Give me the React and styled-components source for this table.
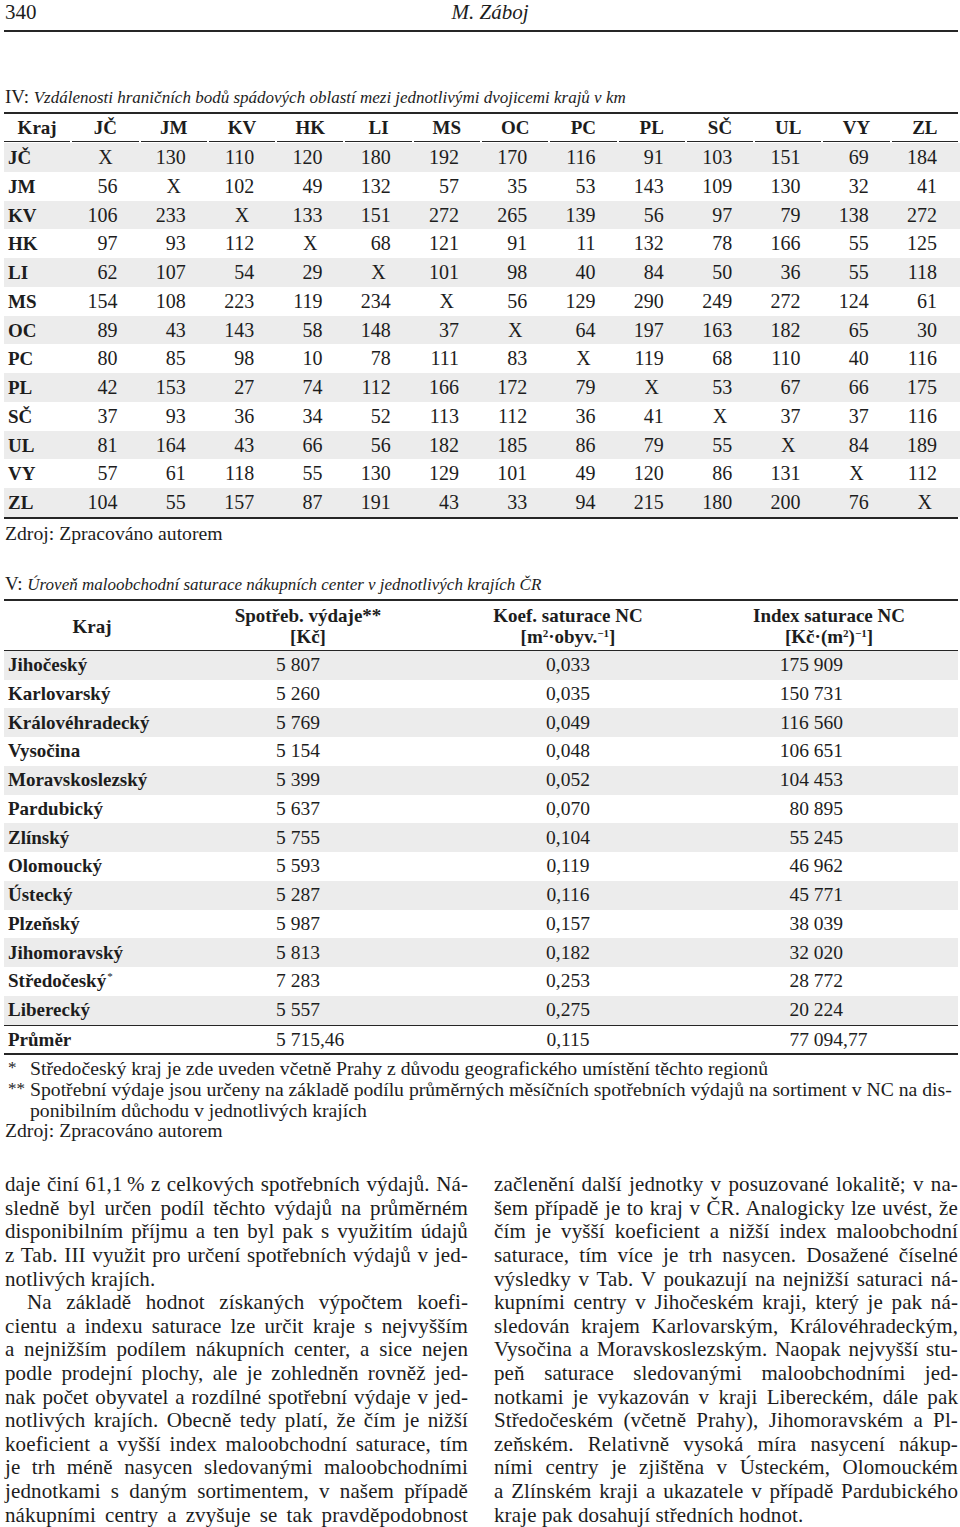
import React from "react";
import styled, { createGlobalStyle } from "styled-components";

//------------------------------------------------------------//
//DATA

const REGIONS = ["JČ", "JM", "KV", "HK", "LI", "MS", "OC", "PC", "PL", "SČ", "UL", "VY", "ZL"];

//null = X (same region)
const DISTANCES = [
  [null, 130, 110, 120, 180, 192, 170, 116, 91, 103, 151, 69, 184],
  [56, null, 102, 49, 132, 57, 35, 53, 143, 109, 130, 32, 41],
  [106, 233, null, 133, 151, 272, 265, 139, 56, 97, 79, 138, 272],
  [97, 93, 112, null, 68, 121, 91, 11, 132, 78, 166, 55, 125],
  [62, 107, 54, 29, null, 101, 98, 40, 84, 50, 36, 55, 118],
  [154, 108, 223, 119, 234, null, 56, 129, 290, 249, 272, 124, 61],
  [89, 43, 143, 58, 148, 37, null, 64, 197, 163, 182, 65, 30],
  [80, 85, 98, 10, 78, 111, 83, null, 119, 68, 110, 40, 116],
  [42, 153, 27, 74, 112, 166, 172, 79, null, 53, 67, 66, 175],
  [37, 93, 36, 34, 52, 113, 112, 36, 41, null, 37, 37, 116],
  [81, 164, 43, 66, 56, 182, 185, 86, 79, 55, null, 84, 189],
  [57, 61, 118, 55, 130, 129, 101, 49, 120, 86, 131, null, 112],
  [104, 55, 157, 87, 191, 43, 33, 94, 215, 180, 200, 76, null],
];

const S = "\u00A0";
const THIN = "\u202F";

const SATURATION = [
  ["Jihočeský", `5${S}807`, "0,033", `175${S}909`],
  ["Karlovarský", `5${S}260`, "0,035", `150${S}731`],
  ["Královéhradecký", `5${S}769`, "0,049", `116${S}560`],
  ["Vysočina", `5${S}154`, "0,048", `106${S}651`],
  ["Moravskoslezský", `5${S}399`, "0,052", `104${S}453`],
  ["Pardubický", `5${S}637`, "0,070", `80${S}895`],
  ["Zlínský", `5${S}755`, "0,104", `55${S}245`],
  ["Olomoucký", `5${S}593`, "0,119", `46${S}962`],
  ["Ústecký", `5${S}287`, "0,116", `45${S}771`],
  ["Plzeňský", `5${S}987`, "0,157", `38${S}039`],
  ["Jihomoravský", `5${S}813`, "0,182", `32${S}020`],
  ["Středočeský", `7${S}283`, "0,253", `28${S}772`, true],
  ["Liberecký", `5${S}557`, "0,275", `20${S}224`],
];

const LEFT_TEXT = [
  [`daje činí 61,1${THIN}% z celkových spotřebních výdajů. Ná-`],
  ["sledně byl určen podíl těchto výdajů na průměrném"],
  ["disponibilním příjmu a ten byl pak s využitím údajů"],
  ["z Tab. III využit pro určení spotřebních výdajů v jed-"],
  ["notlivých krajích.", "last"],
  ["Na základě hodnot získaných výpočtem koefi-", "indent"],
  ["cientu a indexu saturace lze určit kraje s nejvyšším"],
  ["a nejnižším podílem nákupních center, a sice nejen"],
  ["podle prodejní plochy, ale je zohledněn rovněž jed-"],
  ["nak počet obyvatel a rozdílné spotřební výdaje v jed-"],
  ["notlivých krajích. Obecně tedy platí, že čím je nižší"],
  ["koeficient a vyšší index maloobchodní saturace, tím"],
  ["je trh méně nasycen sledovanými maloobchodními"],
  ["jednotkami s daným sortimentem, v našem případě"],
  ["nákupními centry a zvyšuje se tak pravděpodobnost"],
];

const RIGHT_TEXT = [
  ["začlenění další jednotky v posuzované lokalitě; v na-"],
  ["šem případě je to kraj v ČR. Analogicky lze uvést, že"],
  ["čím je vyšší koeficient a nižší index maloobchodní"],
  ["saturace, tím více je trh nasycen. Dosažené číselné"],
  ["výsledky v Tab. V poukazují na nejnižší saturaci ná-"],
  ["kupními centry v Jihočeském kraji, který je pak ná-"],
  ["sledován krajem Karlovarským, Královéhradeckým,"],
  ["Vysočina a Moravskoslezským. Naopak nejvyšší stu-"],
  ["peň saturace sledovanými maloobchodními jed-"],
  ["notkami je vykazován v kraji Libereckém, dále pak"],
  ["Středočeském (včetně Prahy), Jihomoravském a Pl-"],
  ["zeňském. Relativně vysoká míra nasycení nákup-"],
  ["ními centry je zjištěna v Ústeckém, Olomouckém"],
  ["a Zlínském kraji a ukazatele v případě Pardubického"],
  ["kraje pak dosahují středních hodnot.", "last"],
];

//------------------------------------------------------------//

const App = () => {
  return (
    <>
      <GlobalStyle />
      <PAGE>
        <HEADER>
          <PAGENUM>340</PAGENUM>
          <RUNNING>M. Záboj</RUNNING>
          <span />
        </HEADER>

        {/* Table IV */}
        <CAPTION $top={54}>
          IV: <em>Vzdálenosti hraničních bodů spádových oblastí mezi jednotlivými dvojicemi krajů v km</em>
        </CAPTION>
        <TABLE>
          <DROW>
            <DHEAD>Kraj</DHEAD>
            {REGIONS.map((r) => (
              <DHEAD key={r}>{r}</DHEAD>
            ))}
          </DROW>
          {DISTANCES.map((row, i) => (
            <DROW key={REGIONS[i]}>
              <DCELL $shade={i % 2 === 0} $label>
                {REGIONS[i]}
              </DCELL>
              {row.map((v, j) => (
                <DCELL key={j} $shade={i % 2 === 0} $center={v === null}>
                  {v === null ? "X" : v}
                </DCELL>
              ))}
            </DROW>
          ))}
        </TABLE>
        <SOURCE>Zdroj: Zpracováno autorem</SOURCE>

        {/* Table V */}
        <CAPTION $top={29}>
          V: <em>Úroveň maloobchodní saturace nákupních center v jednotlivých krajích ČR</em>
        </CAPTION>
        <TABLE>
          <SHEADROW>
            <SHEAD>Kraj</SHEAD>
            <SHEAD>
              Spotřeb. výdaje**
              <br />
              [Kč]
            </SHEAD>
            <SHEAD>
              Koef. saturace NC
              <br />
              [m<sup>2</sup>·obyv.<sup>−1</sup>]
            </SHEAD>
            <SHEAD>
              Index saturace NC
              <br />
              [Kč·(m<sup>2</sup>)<sup>−1</sup>]
            </SHEAD>
          </SHEADROW>
          {SATURATION.map(([name, spend, koef, index, star], i) => (
            <SROW key={name} $shade={i % 2 === 0}>
              <SLABEL>
                {name}
                {star && <STAR>*</STAR>}
              </SLABEL>
              <SSPEND>{spend}</SSPEND>
              <SKOEF>{koef}</SKOEF>
              <SINDEX>
                <INT>{index}</INT>
              </SINDEX>
            </SROW>
          ))}
          <SROW $total>
            <SLABEL>Průměr</SLABEL>
            <SSPEND>5{S}715,46</SSPEND>
            <SKOEF>0,115</SKOEF>
            <SINDEX>
              <INT>77{S}094</INT>,77
            </SINDEX>
          </SROW>
        </TABLE>

        <NOTES>
          <NOTE>
            <MARK>*</MARK>
            <span>Středočeský kraj je zde uveden včetně Prahy z důvodu geografického umístění těchto regionů</span>
          </NOTE>
          <NOTE>
            <MARK>**</MARK>
            <span>
              Spotřební výdaje jsou určeny na základě podílu průměrných měsíčních spotřebních výdajů na sortiment v NC na dis-
              <br />
              ponibilním důchodu v jednotlivých krajích
            </span>
          </NOTE>
          <NOTESOURCE>Zdroj: Zpracováno autorem</NOTESOURCE>
        </NOTES>

        {/* Body text */}
        <COLUMNS>
          <COLUMN>
            {LEFT_TEXT.map(([t, kind], i) => (
              <LINE key={i} $last={kind === "last"} $indent={kind === "indent"}>
                {t}
              </LINE>
            ))}
          </COLUMN>
          <COLUMN>
            {RIGHT_TEXT.map(([t, kind], i) => (
              <LINE key={i} $last={kind === "last"} $indent={kind === "indent"}>
                {t}
              </LINE>
            ))}
          </COLUMN>
        </COLUMNS>
      </PAGE>
    </>
  );
};

/*-----------------------*\
            CSS
\*-----------------------*/

const GlobalStyle = createGlobalStyle`
  html, body {
    margin: 0;
    padding: 0;
    background: #fff;
  }

  body {
    font-family: "Liberation Serif", "Times New Roman", serif;
    color: #1d1d1d;
  }
`;

const RULE = "#262626";
const SHADE = "#ececec";

const PAGE = styled.div`
  width: 954px;
  padding: 0 2px 0 4px;
`;

const HEADER = styled.header`
  display: grid;
  grid-template-columns: 1fr auto 1fr;
  align-items: center;
  height: 30px;
  border-bottom: 2px solid ${RULE};
  font-size: 21px;
  line-height: 24px;
`;

const PAGENUM = styled.span`
  padding-left: 1px;
  padding-bottom: 6px;
`;

const RUNNING = styled.span`
  font-style: italic;
  padding-left: 18px;
  padding-bottom: 6px;
`;

const CAPTION = styled.div`
  margin-top: ${(p) => p.$top}px;
  margin-bottom: 3px;
  font-size: 19px;
  line-height: 22px;
  padding-left: 1px;

  em {
    font-style: italic;
    font-size: 17px;
  }
`;

const TABLE = styled.div`
  border-top: 2px solid ${RULE};
  border-bottom: 2px solid ${RULE};
`;

const DROW = styled.div`
  display: grid;
  grid-template-columns: repeat(14, 1fr);
  column-gap: 2px;
`;

const DHEAD = styled.div`
  height: 27px;
  line-height: 28px;
  border-bottom: 1.5px solid ${RULE};
  text-align: center;
  font-weight: bold;
  font-size: 19px;
  margin-bottom: 1px;
`;

//cells reach into the grid gap so shaded rows stay continuous
const DCELL = styled.div`
  height: 28.75px;
  line-height: 29px;
  background: ${(p) => (p.$shade ? SHADE : "#fff")};
  text-align: ${(p) => (p.$label ? "left" : p.$center ? "center" : "right")};
  padding-left: ${(p) => (p.$label ? "4px" : "0")};
  padding-right: ${(p) => (p.$label || p.$center ? "2px" : "23px")};
  font-weight: ${(p) => (p.$label ? "bold" : "normal")};
  font-size: ${(p) => (p.$label ? "19px" : "20px")};
  margin-right: -2px;
`;

const SOURCE = styled.div`
  margin-top: 3px;
  font-size: 19.7px;
  line-height: 22px;
  padding-left: 1px;
`;

const SGRID = styled.div`
  display: grid;
  grid-template-columns: 176px 256px 264px 1fr;
  align-items: center;
`;

const SHEADROW = styled(SGRID)`
  height: 49px;
  border-bottom: 1.5px solid ${RULE};
`;

const SHEAD = styled.div`
  text-align: center;
  font-weight: bold;
  font-size: 19px;
  line-height: 21px;
  padding-top: 2px;

  sup {
    font-size: 11px;
    line-height: 0;
    vertical-align: 6px;
  }
`;

const SROW = styled(SGRID)`
  height: ${(p) => (p.$total ? "27.5px" : "28.75px")};
  background: ${(p) => (p.$shade ? SHADE : "#fff")};
  border-top: ${(p) => (p.$total ? `1.5px solid ${RULE}` : "none")};
  font-size: 19.5px;
  line-height: 28px;
`;

const SLABEL = styled.div`
  font-weight: bold;
  font-size: 19px;
  padding-left: 4px;
`;

const STAR = styled.sup`
  font-size: 11px;
  font-weight: normal;
  line-height: 0;
  vertical-align: 7px;
  margin-left: 1px;
`;

const SSPEND = styled.div`
  padding-left: 96px;
`;

const SKOEF = styled.div`
  text-align: center;
`;

const SINDEX = styled.div`
  padding-left: 73px;
`;

const INT = styled.span`
  display: inline-block;
  width: 70px;
  text-align: right;
`;

const NOTES = styled.div`
  margin-top: 3px;
  font-size: 19.7px;
  line-height: 20.8px;
`;

const NOTE = styled.div`
  display: grid;
  grid-template-columns: 22px 1fr;
  padding-left: 4px;
`;

const MARK = styled.span`
  font-size: 17px;
`;

const NOTESOURCE = styled.div`
  padding-left: 1px;
`;

const COLUMNS = styled.div`
  margin-top: 32px;
  display: grid;
  grid-template-columns: 463px 464px;
  column-gap: 26px;
  padding-left: 1px;
`;

const COLUMN = styled.div`
  font-size: 21px;
  line-height: 23.6px;
  letter-spacing: 0.12px;
`;

const LINE = styled.span`
  display: block;
  text-align: justify;
  text-align-last: ${(p) => (p.$last ? "left" : "justify")};
  text-indent: ${(p) => (p.$indent ? "22px" : "0")};
`;

export default App;
